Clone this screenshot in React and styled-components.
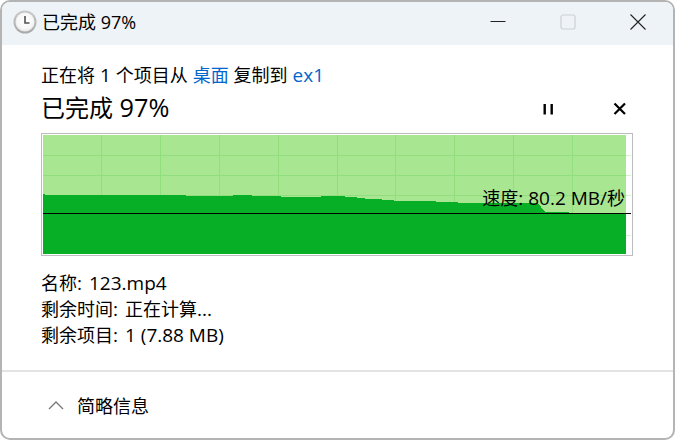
import React from "react";
import styled, { createGlobalStyle } from "styled-components";

const Global = createGlobalStyle`
  html, body { margin: 0; padding: 0; width: 675px; height: 440px; overflow: hidden; background: #ffffff; }
  #root { width: 675px; height: 440px; }
`;

const Window = styled.div`
  box-sizing: border-box;
  width: 675px;
  height: 440px;
  display: flex;
  flex-direction: column;
  background: #fff;
  border: 2px solid #b4b4b4;
  border-radius: 10px;
  overflow: hidden;
  font-family: "Open Sans", "Noto Sans CJK SC", sans-serif;
  color: #000;
`;

const Latin = styled.span`
  font-size: 1.055em;
`;

const TitleBar = styled.header`
  box-sizing: border-box;
  height: 43px;
  flex: none;
  display: flex;
  align-items: center;
  background: #edf3f6;
  padding: 0 0 3px 10px;
`;

const TitleText = styled.div`
  font-size: 18px;
  line-height: 24px;
  margin-left: 4px;
  flex: 1;
`;

const WinButton = styled.button`
  width: 70px;
  height: 40px;
  padding: 0;
  border: 0;
  background: none;
  display: flex;
  align-items: center;
  justify-content: center;
`;

const Body = styled.main`
  flex: 1;
  display: flex;
  flex-direction: column;
  padding: 18px 40px 0 39px;
`;

const Status = styled.div`
  font-size: 18px;
  line-height: 24px;
  white-space: nowrap;
`;

const Link = styled.span`
  color: #0066cc;
`;

const HeadingRow = styled.div`
  display: flex;
  align-items: center;
  height: 30px;
  margin-top: 5px;
`;

const Heading = styled.h1`
  margin: 0;
  flex: 1;
  font-size: 24px;
  font-weight: 400;
  line-height: 30px;
`;

const CtrlButton = styled.button`
  width: 16px;
  height: 16px;
  padding: 0;
  border: 0;
  background: none;
  display: flex;
  margin-top: 3px;
  margin-left: ${p => p.$gap}px;
  margin-right: ${p => p.$right || 0}px;
`;

const ChartFrame = styled.div`
  box-sizing: border-box;
  margin-top: 11px;
  width: 592px;
  height: 123px;
  border: 1px solid #bdbdbd;
  padding: 1px;
  flex: none;
  position: relative;
`;

const ChartSvg = styled.svg`
  display: block;
  width: 588px;
  height: 119px;
`;

const Speed = styled.div`
  position: absolute;
  right: 7px;
  top: 52px;
  font-size: 18px;
  line-height: 24px;
  white-space: nowrap;
`;

const Details = styled.dl`
  margin: 14px 0 0;
  font-size: 18px;
  line-height: 26px;
`;

const DetailRow = styled.div`
  display: flex;
  gap: 7px;
  white-space: nowrap;
`;

const Term = styled.dt``;
const Value = styled.dd`
  margin: 0;
`;

const Footer = styled.footer`
  flex: none;
  height: 66px;
  border-top: 2px solid #e3e3e3;
  display: flex;
  align-items: center;
  padding-left: 46px;
  gap: 13px;
  font-size: 18px;
`;

const Clock = () => (
  <svg width="26" height="26" viewBox="0 0 26 26">
    <defs>
      <linearGradient id="rim" x1="0" y1="0" x2="0" y2="1">
        <stop offset="0" stopColor="#c9c9c9" />
        <stop offset="1" stopColor="#a8a8a8" />
      </linearGradient>
      <radialGradient id="face" cx="0.5" cy="0.45" r="0.6">
        <stop offset="0" stopColor="#ffffff" />
        <stop offset="0.7" stopColor="#f6f6f6" />
        <stop offset="1" stopColor="#dcdcdc" />
      </radialGradient>
    </defs>
    <circle cx="13" cy="13" r="11.5" fill="url(#rim)" />
    <circle cx="13" cy="13" r="9.6" fill="url(#face)" />
    <path d="M13 7v7h4.5" fill="none" stroke="#505050" strokeWidth="1.6" />
  </svg>
);

const tops = [
  [43, 45, 194], [45, 186, 195], [186, 233, 196], [233, 252, 195], [252, 281, 196],
  [281, 321, 197], [321, 345, 196], [345, 357, 197], [357, 365, 198], [365, 382, 199],
  [382, 394, 200], [394, 436, 201], [436, 458, 202], [458, 538, 203],
];

const X0 = 43;
const Y0 = 135;
const areaPath = () => {
  let d = `M0 119`;
  tops.forEach(([a, b, y]) => {
    d += `L${a - X0} ${y - Y0}L${b - X0} ${y - Y0}`;
  });
  d += `L${545 - X0} ${212 - Y0}L${569 - X0} ${212 - Y0}L${569 - X0} ${213 - Y0}L${626 - X0} ${213 - Y0}L${626 - X0} 119Z`;
  return d;
};

const Chart = () => {
  const vs = [101.5, 160.5, 219.5, 278.5, 337.5, 395.5, 454.5, 513.5, 572.5];
  const hs = [155.5, 175.5, 195.5, 235.5];
  return (
    <ChartSvg viewBox="0 0 588 119" shapeRendering="crispEdges">
      <rect x="0" y="0" width="583" height="119" fill="#a9e692" />
      {vs.map(v => <rect key={v} x={v - X0 - 0.5} y="0" width="1" height="119" fill="#90de7d" />)}
      {hs.map(h => <rect key={h} x="0" y={h - Y0 - 0.5} width="588" height="1" fill="#90de7d" />)}
      {hs.map(h => <rect key={h} x="583" y={h - Y0 - 0.5} width="5" height="1" fill="#d4f3ca" />)}
      <path d={areaPath()} fill="#06af25" />
      <rect x="0" y={213 - Y0} width="588" height="1" fill="#000" />
    </ChartSvg>
  );
};

export default function App() {
  return (
    <>
      <Global />
      <Window>
        <TitleBar>
          <Clock />
          <TitleText>已完成 97%</TitleText>
          <WinButton aria-label="最小化">
            <svg width="16" height="16" viewBox="0 0 16 16"><rect x="0.5" y="7" width="15" height="1" fill="#222" /></svg>
          </WinButton>
          <WinButton aria-label="最大化">
            <svg width="16" height="16" viewBox="0 0 16 16"><rect x="1" y="1" width="14" height="14" rx="2" fill="none" stroke="#cdd1d3" strokeWidth="1.2" /></svg>
          </WinButton>
          <WinButton aria-label="关闭">
            <svg width="16" height="16" viewBox="0 0 16 16"><path d="M0.5 0.5L15.5 15.5M15.5 0.5L0.5 15.5" stroke="#222" strokeWidth="1.1" fill="none" /></svg>
          </WinButton>
        </TitleBar>
        <Body>
          <Status>正在将<Latin> 1 </Latin>个项目从<Latin> </Latin><Link>桌面</Link><Latin> </Latin>复制到<Latin> </Latin><Link><Latin>ex1</Latin></Link></Status>
          <HeadingRow>
            <Heading>已完成<Latin> 97%</Latin></Heading>
            <CtrlButton $gap={0} aria-label="暂停">
              <svg width="16" height="16" viewBox="0 0 16 16"><path d="M3.5 3h2.4v10.5H3.5zM10.5 3h2.4v10.5h-2.4z" fill="#000" /></svg>
            </CtrlButton>
            <CtrlButton $gap={56} $right={5} aria-label="取消">
              <svg width="16" height="16" viewBox="0 0 16 16"><path d="M2.5 2.5L13 13M13 2.5L2.5 13" stroke="#000" strokeWidth="2.2" fill="none" /></svg>
            </CtrlButton>
          </HeadingRow>
          <ChartFrame>
            <Chart />
            <Speed>速度<Latin>: 80.2 MB/</Latin>秒</Speed>
          </ChartFrame>
          <Details>
            <DetailRow><Term>名称<Latin>:</Latin></Term><Value><Latin>123.mp4</Latin></Value></DetailRow>
            <DetailRow><Term>剩余时间<Latin>:</Latin></Term><Value>正在计算<Latin>...</Latin></Value></DetailRow>
            <DetailRow><Term>剩余项目<Latin>:</Latin></Term><Value><Latin>1 (7.88 MB)</Latin></Value></DetailRow>
          </Details>
        </Body>
        <Footer>
          <svg width="16" height="10" viewBox="0 0 16 10"><path d="M1 9L8 2L15 9" fill="none" stroke="#777" strokeWidth="1.3" /></svg>
          <span>简略信息</span>
        </Footer>
      </Window>
    </>
  );
}
